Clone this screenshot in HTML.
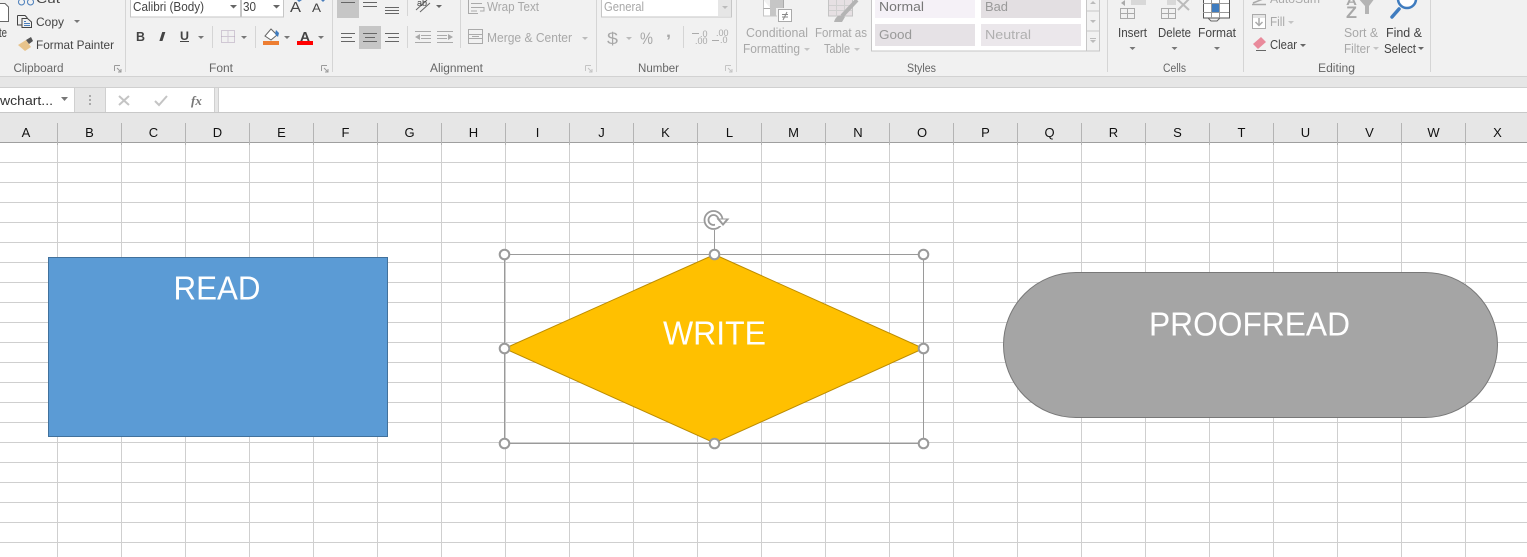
<!DOCTYPE html>
<html><head><meta charset="utf-8"><style>
html,body{margin:0;padding:0;background:#fff;overflow:hidden}
svg{display:block}
text{font-family:"Liberation Sans",sans-serif;font-size:12px;fill:#444}
.d{fill:#a8a8a8}
.g{fill:#666;font-size:11.5px}
.h{fill:#111;font-size:13px;text-anchor:middle}
.s{fill:#fff;font-size:33.500px}
.i{fill:none;stroke:#9a9a9a;stroke-width:1}
.k{fill:none;stroke:#666;stroke-width:1}
.l{fill:none;stroke:#444;stroke-width:1}
.ld{fill:none;stroke:#aaa;stroke-width:1}
</style></head><body>
<svg width="1527" height="557" viewBox="0 0 1527 557" xmlns="http://www.w3.org/2000/svg">
<rect width="1527" height="557" fill="#fff"/>
<!-- grid -->
<path stroke="#cfcfcf" stroke-width="1" fill="none" d="M0 162.500H1527M0 182.500H1527M0 202.500H1527M0 222.500H1527M0 242.500H1527M0 262.500H1527M0 282.500H1527M0 302.500H1527M0 322.500H1527M0 342.500H1527M0 362.500H1527M0 382.500H1527M0 402.500H1527M0 422.500H1527M0 442.500H1527M0 462.500H1527M0 482.500H1527M0 502.500H1527M0 522.500H1527M0 542.500H1527
M57.500 143V557M121.500 143V557M185.500 143V557M249.500 143V557M313.500 143V557M377.500 143V557M441.500 143V557M505.500 143V557M569.500 143V557M633.500 143V557M697.500 143V557M761.500 143V557M825.500 143V557M889.500 143V557M953.500 143V557M1017.500 143V557M1081.500 143V557M1145.500 143V557M1209.500 143V557M1273.500 143V557M1337.500 143V557M1401.500 143V557M1465.500 143V557"/>
<!-- ribbon -->
<rect width="1527" height="76" fill="#f1f1f1"/>
<rect y="76" width="1527" height="37" fill="#e6e6e6"/>
<rect y="76" width="1527" height="1" fill="#d2d2d2"/>
<rect y="87" width="1527" height="1" fill="#d0d0d0"/>
<path stroke="#d5d5d5" fill="none" d="M125.500 0V72M332.500 0V72M596.500 0V72M736.500 0V72M1107.500 0V72M1243.500 0V72M1430.500 0V72M212.500 26V48M255.500 26V48M407.500 26V48M460.500 0V48M683.500 26V48M407.500 0V16"/>
<!-- clipboard -->
<path fill="#fff" stroke="#666" d="M-5 3.500H5L8.500 7V21.500H-5Z"/>
<circle cx="21.500" cy="2" r="3" class="l" style="stroke:#4a7ebb"/><circle cx="30.500" cy="2" r="3" class="l" style="stroke:#4a7ebb"/>
<text x="36" y="3" textLength="24" lengthAdjust="spacingAndGlyphs">Cut</text>
<text x="-1" y="37" style="font-size:13px" textLength="8" lengthAdjust="spacingAndGlyphs">te</text>
<path class="l" d="M17.500 15.500H25L27 17.500V19M22 18.500H27.500L31.500 22V27.500H22Z M17.500 15.500V25H22"/>
<path stroke="#4a7ebb" d="M24 21.500H26M24 23.500H30M24 25.500H30"/>
<text x="36" y="26" textLength="28" lengthAdjust="spacingAndGlyphs">Copy</text>
<path fill="#777" d="M74 20H80L77 23Z"/>
<path fill="#e8c48c" d="M18 45L26 40L31 47L25 51Z"/><path fill="#555" d="M26 40L31 37L33 41L29 44Z"/>
<text x="36" y="49" textLength="78" lengthAdjust="spacingAndGlyphs">Format Painter</text>
<text class="g" x="13.500" y="72" textLength="50" lengthAdjust="spacingAndGlyphs">Clipboard</text>
<path class="i" d="M114.500 65.500H120M114.500 65.500V71M117 68L121 72M121 69V72H118"/>
<!-- font -->
<rect x="130.500" y="-2" width="110" height="19" fill="#fff" stroke="#c6c6c6"/>
<rect x="241.500" y="-2" width="42" height="19" fill="#fff" stroke="#c6c6c6"/>
<text x="133" y="11" style="font-size:13px" textLength="71" lengthAdjust="spacingAndGlyphs">Calibri (Body)</text>
<text x="243" y="11" style="font-size:13px" textLength="13" lengthAdjust="spacingAndGlyphs">30</text>
<path fill="#666" d="M230 5H237L233.500 8.500ZM273 5H280L276.500 8.500Z"/>
<text x="290" y="12" style="font-size:15px" textLength="11" lengthAdjust="spacingAndGlyphs">A</text>
<text x="312" y="12" style="font-size:12px" textLength="9" lengthAdjust="spacingAndGlyphs">A</text>
<path fill="#4a7ebb" d="M299 2L302 0H297ZM321 0H325L323 2Z"/>
<text x="136" y="41" style="font-weight:bold;font-size:13px" textLength="9" lengthAdjust="spacingAndGlyphs">B</text>
<text x="159" y="41" style="font-style:italic;font-weight:bold;font-size:13px" textLength="6" lengthAdjust="spacingAndGlyphs">I</text>
<text x="180" y="40" style="font-weight:bold;font-size:12px" textLength="9" lengthAdjust="spacingAndGlyphs">U</text>
<rect x="180" y="41" width="9" height="1" fill="#444"/>
<path fill="#777" d="M198 36H204L201 39ZM241 36H247L244 39ZM284 36H290L287 39ZM318 36H324L321 39Z"/>
<path stroke="#b0a0b8" stroke-dasharray="1 1" fill="none" d="M221.500 30.500H234.500V42.500H221.500ZM228 30.500V42.500M221.500 36.500H234.500"/>
<path fill="#fff" stroke="#666" d="M265 36L271 29L277 35L271 40Z"/><path fill="#3f7cbf" d="M276 30L279 33L278 37L275 34Z"/>
<rect x="263" y="41" width="16" height="4" fill="#ed7d31"/>
<text x="300" y="41" style="font-weight:bold;font-size:13px" textLength="10" lengthAdjust="spacingAndGlyphs">A</text>
<rect x="297" y="41" width="16" height="4" fill="#f00"/>
<text class="g" x="209" y="72" textLength="24" lengthAdjust="spacingAndGlyphs">Font</text>
<path class="i" d="M321.500 65.500H327M321.500 65.500V71M324 68L328 72M328 69V72H325"/>
<!-- alignment -->
<rect x="337" y="0" width="22" height="18" fill="#c6c6c6"/>
<rect x="359" y="26" width="22" height="23" fill="#c6c6c6"/>
<path class="k" d="M341 2.500H355M363 2.500H377M363 6.500H377M385 7.500H399M385 10.500H399M385 13.500H399M341 33.500H355M341 37.500H352M341 41.500H355M363 33.500H377M365 37.500H375M363 41.500H377M385 33.500H399M388 37.500H399M385 41.500H399"/>
<path class="k" d="M416 10L427 0M420 12L430 3"/>
<text x="417" y="6" style="font-size:9px">ab</text>
<path fill="#666" d="M436 5H442L439 8Z"/>
<path class="ld" d="M415 31.500H431M421 35.500H431M421 38.500H431M415 42.500H431M437 31.500H453M437 35.500H447M437 38.500H447M437 42.500H453"/>
<path fill="#aaa" d="M415 37L420 34V40ZM453 37L448 34V40Z"/>
<path class="ld" d="M468.500 0V13.500H478M471 3.500H482M471 7.500H484V11H480M471 11H477"/>
<text class="d" x="487" y="11" style="font-size:13px" textLength="52" lengthAdjust="spacingAndGlyphs">Wrap Text</text>
<path class="ld" d="M468.500 29.500H482.500V43.500H468.500ZM468.500 34.500H482.500M468.500 38.500H482.500M472 36.500H479"/>
<text class="d" x="487" y="42" style="font-size:13px" textLength="85" lengthAdjust="spacingAndGlyphs">Merge &amp; Center</text>
<path fill="#bbb" d="M582 37H588L585 40Z"/>
<text class="g" x="430" y="72" textLength="53" lengthAdjust="spacingAndGlyphs">Alignment</text>
<path class="i" style="stroke:#c4c4c4" d="M585.500 65.500H591M585.500 65.500V71M588 68L592 72M592 69V72H589"/>
<!-- number -->
<rect x="601.500" y="-2" width="130" height="19" fill="#fff" stroke="#c6c6c6"/>
<rect x="718" y="-1" width="13" height="17" fill="#e6e6e6"/>
<path fill="#bbb" d="M722 6H728L725 9Z"/>
<text class="d" x="604" y="11" style="font-size:13px" textLength="40" lengthAdjust="spacingAndGlyphs">General</text>
<text class="d" x="607" y="44" style="font-size:17px" textLength="11" lengthAdjust="spacingAndGlyphs">$</text>
<path fill="#bbb" d="M626 37H632L629 40Z"/>
<text class="d" x="640" y="44" style="font-size:17px" textLength="13" lengthAdjust="spacingAndGlyphs">%</text>
<text class="d" x="666" y="37" style="font-size:16px;font-weight:bold" textLength="5" lengthAdjust="spacingAndGlyphs">,</text>
<text class="d" x="700" y="37" style="font-size:9px">.0</text><text class="d" x="695" y="44" style="font-size:9px">.00</text>
<text class="d" x="716" y="36" style="font-size:9px">.00</text><text class="d" x="720" y="43" style="font-size:9px">.0</text>
<path class="ld" d="M692 33.500H699M712 40.500H719"/>
<text class="g" x="638" y="72" textLength="41" lengthAdjust="spacingAndGlyphs">Number</text>
<path class="i" style="stroke:#c4c4c4" d="M725.500 65.500H731M725.500 65.500V71M728 68L732 72M732 69V72H729"/>
<!-- styles -->
<path fill="#fff" stroke="#c6c6c6" d="M763.500 0V16H777"/>
<path fill="#c6c6c6" d="M770 0H783V8H776V16H770Z"/>
<path class="ld" d="M763.500 8.500H770M783.500 0V8"/>
<rect x="778.500" y="9.500" width="13" height="12" fill="#fff" stroke="#aaa"/>
<path class="ld" style="stroke:#888" d="M782 14.500H788M782 17H788M787 12L783 20"/>
<text class="d" x="746" y="37" style="font-size:13px" textLength="62" lengthAdjust="spacingAndGlyphs">Conditional</text>
<text class="d" x="743" y="53" style="font-size:13px" textLength="57" lengthAdjust="spacingAndGlyphs">Formatting</text>
<path fill="#c4c4c4" d="M804 48H810L807 51Z"/>
<rect x="828.500" y="-1" width="24" height="17" fill="#e6e0e3" stroke="#c4c4c4"/>
<path stroke="#d0d0d0" fill="none" d="M836.500 0V16M844.500 0V16M829 5.500H852M829 10.500H852"/>
<path stroke="#b4b4b4" stroke-width="4" d="M857 0L842 16"/><path fill="#b4b4b4" d="M834 22C836 15 841 14 845 17L842 22Z"/>
<text class="d" x="815" y="37" style="font-size:13px" textLength="52" lengthAdjust="spacingAndGlyphs">Format as</text>
<text class="d" x="824" y="53" style="font-size:13px" textLength="26" lengthAdjust="spacingAndGlyphs">Table</text>
<path fill="#c4c4c4" d="M854 48H860L857 51Z"/>
<rect x="871.500" y="-2" width="215" height="53" fill="#fff" stroke="#c6c6c6"/>
<rect x="875" y="0" width="100" height="18" fill="#f5f1f7"/>
<rect x="981" y="0" width="100" height="18" fill="#e3dfe2"/>
<rect x="875" y="24" width="100" height="22" fill="#e6e2e6"/>
<rect x="981" y="24" width="100" height="22" fill="#ebe7eb"/>
<text x="879" y="11" style="font-size:13px;fill:#777" textLength="45" lengthAdjust="spacingAndGlyphs">Normal</text>
<text x="985" y="11" style="font-size:13px;fill:#999" textLength="23" lengthAdjust="spacingAndGlyphs">Bad</text>
<text x="879" y="39" style="font-size:13px;fill:#999" textLength="33" lengthAdjust="spacingAndGlyphs">Good</text>
<text x="985" y="39" style="font-size:13px;fill:#b0b0b0" textLength="46" lengthAdjust="spacingAndGlyphs">Neutral</text>
<path fill="#f1f1f1" stroke="#c6c6c6" d="M1086.500 -2H1099.500V11H1086.500ZM1086.500 11H1099.500V31H1086.500ZM1086.500 31H1099.500V51H1086.500Z"/>
<path fill="#bbb" d="M1090 4L1093 1L1096 4ZM1090 20H1096L1093 23ZM1090 40H1096L1093 43Z"/><rect x="1090" y="38" width="6" height="1" fill="#bbb"/>
<text class="g" x="907" y="72" textLength="29" lengthAdjust="spacingAndGlyphs">Styles</text>
<!-- cells -->
<path class="ld" d="M1120.500 8.500H1134.500V18.500H1120.500ZM1127.500 8.500V18.500M1120.500 13.500H1134.500M1161.500 8.500H1175.500V18.500H1161.500ZM1168.500 8.500V18.500M1161.500 13.500H1175.500"/>
<rect x="1131" y="0" width="15" height="5" fill="#d8d8d8"/><path fill="#aaa" d="M1121 3L1125 0V6Z"/>
<rect x="1167" y="0" width="9" height="5" fill="#d8d8d8"/><path stroke="#bbb" stroke-width="2" d="M1177 -1L1189 10M1189 -1L1178 10"/>
<rect x="1203.500" y="-2" width="26" height="20" fill="#fff" stroke="#555"/>
<rect x="1211" y="3" width="8" height="9" fill="#3f7cbf"/>
<path stroke="#999" fill="none" d="M1211.500 0V18M1219.500 0V18M1203 3.500H1229M1203 12.500H1229"/>
<path class="k" d="M1208 18L1211 21H1217L1220 18"/>
<text x="1118" y="37" style="font-size:13px" textLength="29" lengthAdjust="spacingAndGlyphs">Insert</text>
<text x="1158" y="37" style="font-size:13px" textLength="33" lengthAdjust="spacingAndGlyphs">Delete</text>
<text x="1198" y="37" style="font-size:13px" textLength="38" lengthAdjust="spacingAndGlyphs">Format</text>
<path fill="#777" d="M1129.500 47H1135.500L1132.500 50ZM1171.500 47H1177.500L1174.500 50ZM1214 47H1220L1217 50Z"/>
<text class="g" x="1163" y="72" textLength="23" lengthAdjust="spacingAndGlyphs">Cells</text>
<!-- editing -->
<path class="ld" style="stroke-width:1.500" d="M1252 4.500H1266M1253 3L1263 -1"/>
<text class="d" x="1270" y="3" textLength="50" lengthAdjust="spacingAndGlyphs">AutoSum</text>
<rect x="1252.500" y="14.500" width="13" height="14" fill="#fff" stroke="#aaa"/>
<path fill="#e4e4e4" stroke="none" d="M1253 15H1265V18H1253Z"/><path class="ld" style="stroke-width:1.500" d="M1259 18V25M1255.500 22L1259 25.500L1262.500 22"/>
<text class="d" x="1270" y="26" style="font-size:13px" textLength="15" lengthAdjust="spacingAndGlyphs">Fill</text>
<path fill="#c4c4c4" d="M1288 21H1294L1291 24Z"/>
<path fill="#e98a9b" d="M1253 44L1261 37L1266 42L1258 49Z"/>
<path class="k" d="M1256 50.500H1266"/>
<text x="1270" y="49" style="font-size:13px" textLength="27" lengthAdjust="spacingAndGlyphs">Clear</text>
<path fill="#666" d="M1300 44H1306L1303 47Z"/>
<text class="d" x="1346" y="18" style="font-size:17px;font-weight:bold" textLength="11" lengthAdjust="spacingAndGlyphs">Z</text>
<text class="d" x="1346" y="5" style="font-size:12px;font-weight:bold" textLength="11" lengthAdjust="spacingAndGlyphs">A</text>
<path fill="#b4b4b4" d="M1358 -2H1375L1369 6V14H1365V6Z"/>
<circle cx="1407" cy="-1" r="9" fill="#fff" stroke="#3f7cbf" stroke-width="2.500"/>
<path stroke="#3f7cbf" stroke-width="3.500" stroke-linecap="round" d="M1399 9L1392 17"/>
<text class="d" x="1344" y="37" style="font-size:13px" textLength="34" lengthAdjust="spacingAndGlyphs">Sort &amp;</text>
<text class="d" x="1344" y="53" style="font-size:13px" textLength="26" lengthAdjust="spacingAndGlyphs">Filter</text>
<path fill="#c4c4c4" d="M1373 47H1379L1376 50Z"/>
<text x="1386" y="37" style="font-size:13px" textLength="36" lengthAdjust="spacingAndGlyphs">Find &amp;</text>
<text x="1384" y="53" style="font-size:13px" textLength="32" lengthAdjust="spacingAndGlyphs">Select</text>
<path fill="#666" d="M1418 47H1424L1421 50Z"/>
<text class="g" x="1318" y="72" textLength="37" lengthAdjust="spacingAndGlyphs">Editing</text>
<!-- formula bar -->
<rect x="-2" y="87.500" width="76.500" height="25" fill="#fff" stroke="#d0d0d0"/>
<text x="0" y="105" style="font-size:13px;fill:#333" textLength="53" lengthAdjust="spacingAndGlyphs">wchart...</text>
<path fill="#777" d="M61 97H68L64.500 101Z"/>
<path stroke="#aaa" stroke-dasharray="2 2" stroke-width="2" d="M90 95V106"/>
<rect x="105.500" y="87.500" width="109" height="25" fill="#fff" stroke="#d0d0d0"/>
<path stroke="#c4c4c4" stroke-width="2" fill="none" d="M119 96L129 105M129 96L119 105M155 101L159 105L167 96"/>
<text x="191" y="105" style="font-family:'Liberation Serif',serif;font-style:italic;font-weight:bold;font-size:13px;fill:#777">fx</text>
<rect x="218.500" y="87.500" width="1310" height="25" fill="#fff" stroke="#d0d0d0"/>
<!-- headers -->
<rect y="113" width="1527" height="29" fill="#e6e6e6"/>
<rect y="112" width="1527" height="1" fill="#c8c8c8"/>
<rect y="142" width="1527" height="1" fill="#9f9f9f"/>
<path stroke="#b4b4b4" d="M57.500 123V145M121.500 123V145M185.500 123V145M249.500 123V145M313.500 123V145M377.500 123V145M441.500 123V145M505.500 123V145M569.500 123V145M633.500 123V145M697.500 123V145M761.500 123V145M825.500 123V145M889.500 123V145M953.500 123V145M1017.500 123V145M1081.500 123V145M1145.500 123V145M1209.500 123V145M1273.500 123V145M1337.500 123V145M1401.500 123V145M1465.500 123V145"/>
<text class="h" x="26" y="137">A</text><text class="h" x="89.500" y="137">B</text><text class="h" x="153.500" y="137">C</text><text class="h" x="217.500" y="137">D</text><text class="h" x="281.500" y="137">E</text><text class="h" x="345.500" y="137">F</text><text class="h" x="409.500" y="137">G</text><text class="h" x="473.500" y="137">H</text><text class="h" x="537.500" y="137">I</text><text class="h" x="601.500" y="137">J</text><text class="h" x="665.500" y="137">K</text><text class="h" x="729.500" y="137">L</text><text class="h" x="793.500" y="137">M</text><text class="h" x="858" y="137">N</text><text class="h" x="922" y="137">O</text><text class="h" x="985.500" y="137">P</text><text class="h" x="1049.500" y="137">Q</text><text class="h" x="1113.500" y="137">R</text><text class="h" x="1177.500" y="137">S</text><text class="h" x="1241.500" y="137">T</text><text class="h" x="1305.500" y="137">U</text><text class="h" x="1369.500" y="137">V</text><text class="h" x="1433.500" y="137">W</text><text class="h" x="1497.500" y="137">X</text>
<!-- shapes -->
<rect x="48.500" y="257.500" width="339" height="179" fill="#5b9bd5" stroke="#41719c"/>
<text class="s" x="173.500" y="299.500" textLength="87" lengthAdjust="spacingAndGlyphs">READ</text>
<rect x="1003.500" y="272.500" width="494" height="145" rx="72.500" ry="72.500" fill="#a5a5a5" stroke="#787878"/>
<text class="s" x="1149" y="335.500" textLength="201" lengthAdjust="spacingAndGlyphs">PROOFREAD</text>
<path d="M714.500 254.500L923.500 348.500L714.500 443L504.500 348.500Z" fill="#ffc000" stroke="#bc8c00"/>
<text class="s" x="663" y="344.500" textLength="103" lengthAdjust="spacingAndGlyphs">WRITE</text>
<!-- selection -->
<rect x="504.500" y="254.500" width="419" height="189" fill="none" stroke="#9a9a9a"/>
<path stroke="#9a9a9a" d="M714.500 230V254"/>
<g fill="#fff" stroke="#9a9a9a" stroke-width="2">
<circle cx="504.500" cy="254.500" r="4.800"/><circle cx="714.500" cy="254.500" r="4.800"/><circle cx="923.500" cy="254.500" r="4.800"/>
<circle cx="504.500" cy="348.500" r="4.800"/><circle cx="923.500" cy="348.500" r="4.800"/>
<circle cx="504.500" cy="443.500" r="4.800"/><circle cx="714.500" cy="443.500" r="4.800"/><circle cx="923.500" cy="443.500" r="4.800"/>
</g>
<circle cx="713.500" cy="220" r="9" fill="#fff" stroke="#9a9a9a" stroke-width="1.800"/>
<circle cx="713.500" cy="220" r="5" fill="#fff" stroke="#9a9a9a" stroke-width="1.800"/>
<path fill="#fff" d="M715 220H724V226H715Z"/>
<path fill="#9a9a9a" d="M716.500 218.500H729.500L723 226Z"/>
<path fill="#fff" d="M720 219.500H726L723 223Z"/>
</svg>
</body></html>
